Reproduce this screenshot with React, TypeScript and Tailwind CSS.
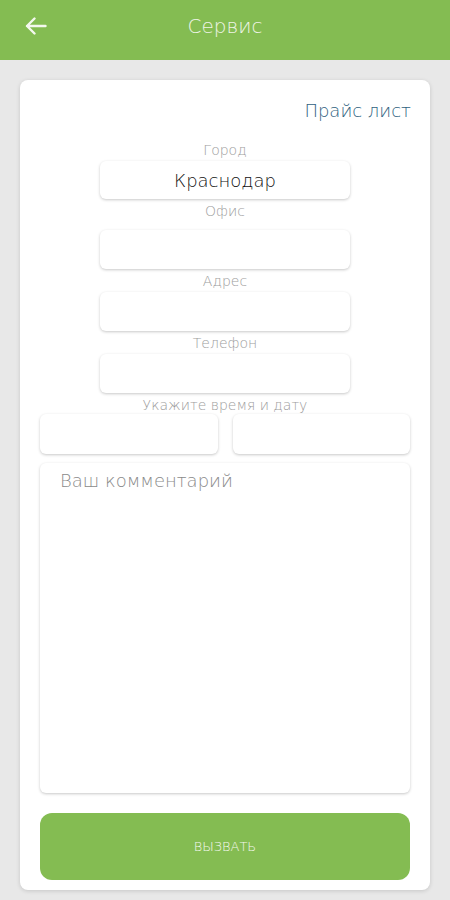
const font = { fontFamily: '"DejaVu Sans", "Open Sans", "Liberation Sans", sans-serif' };

function Field({ value, className }: { value?: string; className?: string }) {
  return (
    <div
      className={`flex items-center justify-center rounded-[6px] bg-white shadow-[0_1px_3px_rgba(0,0,0,0.22)] ${className ?? ''}`}
    >
      {value && <span className="text-[18px] font-extralight text-[#111]">{value}</span>}
    </div>
  );
}

function Label({ text, className }: { text: string; className?: string }) {
  return (
    <div className={`h-[20px] text-center text-[14px] leading-[20px] font-extralight text-[#9c9c9c] ${className ?? ''}`}>
      {text}
    </div>
  );
}

export default function App() {
  return (
    <div className="min-h-[900px] w-[450px] bg-[#e8e8e8]" style={font}>
      <header className="relative flex h-[60px] items-center justify-center bg-[#84bc52]">
        <svg
          className="absolute left-[25px] top-[17px]"
          width="22"
          height="18"
          viewBox="0 0 22 18"
          fill="none"
          stroke="#f4f8ee"
          strokeWidth="2.4"
          strokeLinecap="round"
          strokeLinejoin="round"
        >
          <path d="M20.5 9H2M9.5 1.5 2 9l7.5 7.5" />
        </svg>
        <h1 className="mb-[8px] text-[20px] font-extralight text-[#eef4e6]">Сервис</h1>
      </header>

      <main className="mx-5 mt-5 rounded-[8px] bg-white px-5 pb-[10px] pt-[18px] shadow-[0_1px_4px_rgba(0,0,0,0.15)]">
        <div className="text-right text-[18px] leading-[26px] font-extralight text-[#2f5f7e]">
          <span className="mr-[-1px]">Прайс лист</span>
        </div>

        <div className="flex flex-col items-center">
          <Label text="Город" className="mt-4" />
          <Field value="Краснодар" className="mt-[1px] h-[38px] w-[250px]" />
          <Label text="Офис" className="mt-[2px]" />
          <Field className="mt-[9px] h-[39px] w-[250px]" />
          <Label text="Адрес" className="mt-[2px]" />
          <Field className="mt-[1px] h-[39px] w-[250px]" />
          <Label text="Телефон" className="mt-[2px]" />
          <Field className="mt-[1px] h-[39px] w-[250px]" />
          <Label text="Укажите время и дату" className="mt-[2px]" />
        </div>

        <div className="mt-[-1px] grid grid-cols-2 gap-[15px]">
          <Field className="h-[40px]" />
          <Field className="h-[40px]" />
        </div>

        <div className="mt-[9px] h-[330px] rounded-[6px] bg-white px-5 pt-[5px] shadow-[0_1px_3px_rgba(0,0,0,0.22)]">
          <span className="text-[18px] leading-[26px] font-extralight text-[#8a8a8a]">Ваш комментарий</span>
        </div>

        <button
          type="button"
          className="mt-5 flex h-[67px] w-full items-center justify-center rounded-[12px] bg-[#84bc52] text-[13px] font-extralight text-[#f4f8ee]"
        >
          ВЫЗВАТЬ
        </button>
      </main>
    </div>
  );
}
